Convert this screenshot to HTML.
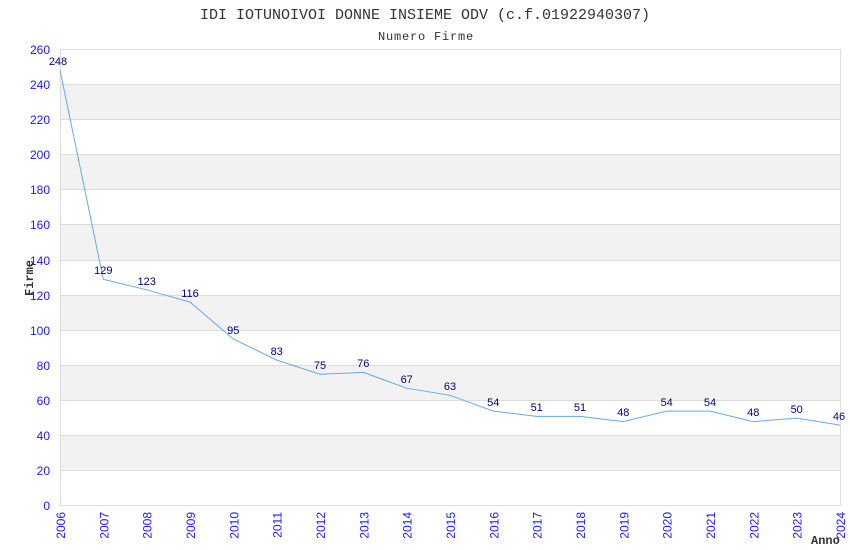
<!DOCTYPE html>
<html><head><meta charset="utf-8"><style>
html,body{margin:0;padding:0;background:#fff;}
svg{display:block;}
</style></head><body>
<svg width="850" height="550" xmlns="http://www.w3.org/2000/svg">
<rect width="850" height="550" fill="#fff"/>
<text x="425" y="19" text-anchor="middle" font-family="Liberation Mono, monospace" font-size="15" fill="#333">IDI IOTUNOIVOI DONNE INSIEME ODV (c.f.01922940307)</text>
<text x="426" y="40" text-anchor="middle" font-family="Liberation Mono, monospace" font-size="12" letter-spacing="0.8" fill="#333">Numero Firme</text>
<g fill="#f2f2f2">
<rect x="60" y="84.2" width="780" height="35.2"/>
<rect x="60" y="154.5" width="780" height="35.2"/>
<rect x="60" y="224.8" width="780" height="35.2"/>
<rect x="60" y="295.1" width="780" height="35.2"/>
<rect x="60" y="365.4" width="780" height="35.2"/>
<rect x="60" y="435.7" width="780" height="35.2"/>
</g>
<g stroke="#dddddd" stroke-width="1">
<line x1="60" y1="49.5" x2="840" y2="49.5"/>
<line x1="60" y1="84.5" x2="840" y2="84.5"/>
<line x1="60" y1="119.5" x2="840" y2="119.5"/>
<line x1="60" y1="154.5" x2="840" y2="154.5"/>
<line x1="60" y1="189.5" x2="840" y2="189.5"/>
<line x1="60" y1="224.5" x2="840" y2="224.5"/>
<line x1="60" y1="260.5" x2="840" y2="260.5"/>
<line x1="60" y1="295.5" x2="840" y2="295.5"/>
<line x1="60" y1="330.5" x2="840" y2="330.5"/>
<line x1="60" y1="365.5" x2="840" y2="365.5"/>
<line x1="60" y1="400.5" x2="840" y2="400.5"/>
<line x1="60" y1="435.5" x2="840" y2="435.5"/>
<line x1="60" y1="470.5" x2="840" y2="470.5"/>
<line x1="60" y1="505.5" x2="840" y2="505.5"/>
<line x1="60.5" y1="49" x2="60.5" y2="506"/>
<line x1="840.5" y1="49" x2="840.5" y2="506"/>
</g>
<g font-family="Liberation Sans, sans-serif" font-size="12" fill="#1a1aff" text-anchor="end">
<text x="50" y="54">260</text><text x="50" y="89">240</text><text x="50" y="124">220</text>
<text x="50" y="159">200</text><text x="50" y="194">180</text><text x="50" y="229">160</text>
<text x="50" y="265">140</text><text x="50" y="300">120</text><text x="50" y="335">100</text>
<text x="50" y="370">80</text><text x="50" y="405">60</text><text x="50" y="440">40</text>
<text x="50" y="475">20</text><text x="50" y="510">0</text>
</g>
<g font-family="Liberation Sans, sans-serif" font-size="12" fill="#1a1aff" text-anchor="end">
<text transform="translate(65,512) rotate(-90)">2006</text>
<text transform="translate(108.3,512) rotate(-90)">2007</text>
<text transform="translate(151.7,512) rotate(-90)">2008</text>
<text transform="translate(195,512) rotate(-90)">2009</text>
<text transform="translate(238.3,512) rotate(-90)">2010</text>
<text transform="translate(281.7,512) rotate(-90)">2011</text>
<text transform="translate(325,512) rotate(-90)">2012</text>
<text transform="translate(368.3,512) rotate(-90)">2013</text>
<text transform="translate(411.7,512) rotate(-90)">2014</text>
<text transform="translate(455,512) rotate(-90)">2015</text>
<text transform="translate(498.3,512) rotate(-90)">2016</text>
<text transform="translate(541.7,512) rotate(-90)">2017</text>
<text transform="translate(585,512) rotate(-90)">2018</text>
<text transform="translate(628.3,512) rotate(-90)">2019</text>
<text transform="translate(671.7,512) rotate(-90)">2020</text>
<text transform="translate(715,512) rotate(-90)">2021</text>
<text transform="translate(758.3,512) rotate(-90)">2022</text>
<text transform="translate(801.7,512) rotate(-90)">2023</text>
<text transform="translate(845,512) rotate(-90)">2024</text>
</g>
<text transform="translate(33,278) rotate(-90)" text-anchor="middle" font-family="Liberation Mono, monospace" font-size="12" font-weight="bold" fill="#333">Firme</text>
<text x="811" y="544" font-family="Liberation Mono, monospace" font-size="12" font-weight="bold" fill="#333">Anno</text>
<polyline fill="none" stroke="#66aaee" stroke-width="1" points="60,70.1 103.3,279.3 146.7,289.8 190,302.1 233.3,339 276.7,360.1 320,374.2 363.3,372.4 406.7,388.2 450,395.3 493.3,411.1 536.7,416.4 580,416.4 623.3,421.6 666.7,411.1 710,411.1 753.3,421.6 796.7,418.1 840,425.1"/>
<g font-family="Liberation Sans, sans-serif" font-size="11" fill="#000080" text-anchor="middle">
<text x="58" y="65">248</text>
<text x="103.3" y="274">129</text>
<text x="146.7" y="285">123</text>
<text x="190" y="297">116</text>
<text x="233.3" y="334">95</text>
<text x="276.7" y="355">83</text>
<text x="320" y="369">75</text>
<text x="363.3" y="367">76</text>
<text x="406.7" y="383">67</text>
<text x="450" y="390">63</text>
<text x="493.3" y="406">54</text>
<text x="536.7" y="411">51</text>
<text x="580" y="411">51</text>
<text x="623.3" y="416">48</text>
<text x="666.7" y="406">54</text>
<text x="710" y="406">54</text>
<text x="753.3" y="416">48</text>
<text x="796.7" y="413">50</text>
<text x="839" y="420">46</text>
</g>
</svg>
</body></html>
